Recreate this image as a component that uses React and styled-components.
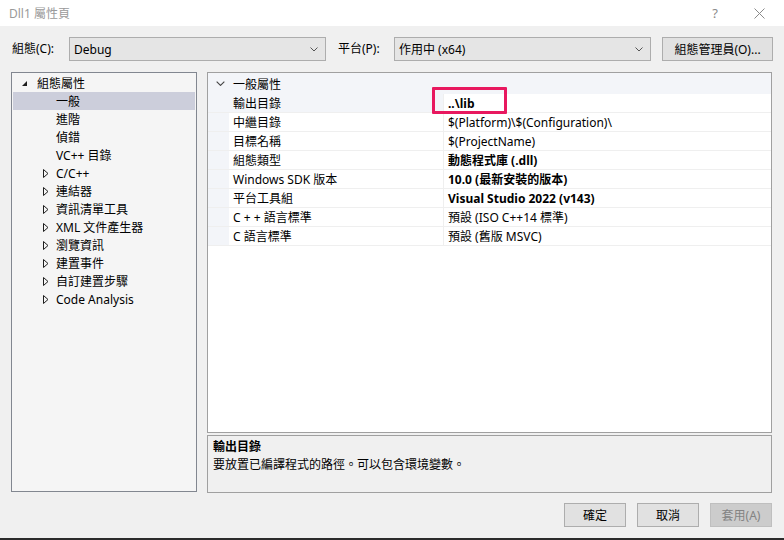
import React from 'react';
import styled, { createGlobalStyle } from 'styled-components';

const Global = createGlobalStyle`
  html, body { margin: 0; padding: 0; }
  body {
    width: 784px; height: 540px; overflow: hidden; background: #f0f0f0;
    font-family: "Noto Sans", "Noto Sans CJK TC", sans-serif;
    font-size: 12px; color: #000;
  }
  * { box-sizing: border-box; }
`;

const Window = styled.div`
  width: 784px; height: 540px; display: flex; flex-direction: column;
  background: #f0f0f0; border-bottom: 2px solid #2b2b2b;
`;

const TitleBar = styled.div`
  height: 26px; background: #fff; display: flex; align-items: center;
  padding-left: 9px; padding-right: 3px; color: #9a9a9a; font-size: 12px;
`;
const TitleText = styled.div` flex: 1; `;
const TitleBtn = styled.div`
  width: 44px; height: 26px; display: flex; align-items: center; justify-content: center;
  color: #8a8a8a; font-size: 13px;
`;

const Toolbar = styled.div`
  display: flex; align-items: center; height: 24px; margin-top: 11px; padding-left: 12px;
`;
const Label = styled.div`
  width: ${p => p.$w}px; line-height: 24px; white-space: nowrap;
`;
const Combo = styled.div`
  width: ${p => p.$w}px; height: 24px; background: #e5e5e5; border: 1px solid #adadad;
  display: flex; align-items: center; padding: 0 7px 0 4px; margin-right: ${p => p.$mr}px;
`;
const ComboText = styled.div` flex: 1; `;
const Button = styled.div`
  width: ${p => p.$w}px; height: 24px; border: 1px solid ${p => p.$disabled ? '#bfbfbf' : '#adadad'};
  background: ${p => p.$disabled ? '#cccccc' : '#e1e1e1'}; color: ${p => p.$disabled ? '#838383' : '#000'};
  display: flex; align-items: center; justify-content: center;
`;

const Main = styled.div`
  display: flex; align-items: flex-start; gap: 10px; margin-top: 11px; padding-left: 11px; height: 421px;
`;
const Tree = styled.div`
  width: 186px; height: 420px; background: #f5f5f5; border: 1px solid #828790; padding-top: 1px;
`;
const TreeRow = styled.div`
  height: 18px; display: flex; align-items: center; margin: 0 1px;
  background: ${p => p.$sel ? '#cccedb' : 'transparent'};
  padding-left: ${p => p.$level ? 30 : 8}px;
`;
const TreeIcon = styled.div`
  width: ${p => p.$level ? 13 : 16}px; display: flex; align-items: center;
`;
const TreeText = styled.div` white-space: nowrap; `;

const RightCol = styled.div`
  width: 565px; display: flex; flex-direction: column; gap: 2px;
`;
const Grid = styled.div`
  position: relative; height: 361px; background: #fff; border: 1px solid #a0a0a0;
`;
const HeaderRow = styled.div`
  height: 21px; background: #f3f5f9; display: flex; align-items: center;
`;
const HeaderIcon = styled.div`
  width: 25px; display: flex; justify-content: center;
`;
const PropRow = styled.div`
  height: 19px; display: flex; border-bottom: 1px solid #efefef;
`;
const Gutter = styled.div` width: 21px; background: #f3f5f9; `;
const NameCell = styled.div`
  width: 215px; padding-left: 4px; display: flex; align-items: center; white-space: nowrap;
  background: ${p => p.$sel ? '#f3f5f9' : '#fff'}; border-right: 1px solid #efefef;
`;
const ValueCell = styled.div`
  flex: 1; padding-left: 4px; display: flex; align-items: center; white-space: nowrap;
  font-weight: ${p => p.$bold ? 700 : 400};
`;
const Highlight = styled.div`
  position: absolute; left: 224px; top: 14px; width: 75px; height: 27px;
  border: 3px solid #e8185f; border-radius: 1px; pointer-events: none;
`;

const Desc = styled.div`
  height: 58px; border: 1px solid #a0a0a0; background: #f0f0f0; padding: 2px 5px;
`;
const DescTitle = styled.div` font-weight: 700; line-height: 18px; `;
const DescText = styled.div` line-height: 18px; `;

const Footer = styled.div`
  display: flex; justify-content: flex-end; gap: 11px; margin-top: 10px; padding-right: 12px;
`;

const Chevron = ({ size = 8, color = '#555' }) => (
  <svg width={size} height={size / 2 + 1} viewBox="0 0 8 5">
    <path d="M0.5 0.5 L4 4 L7.5 0.5" fill="none" stroke={color} strokeWidth="1" />
  </svg>
);
const Expanded = () => (
  <svg width="7" height="7" viewBox="0 0 7 7"><path d="M6 1 L6 6 L1 6 Z" fill="#1e1e1e" /></svg>
);
const Collapsed = () => (
  <svg width="6" height="9" viewBox="0 0 6 9"><path d="M0.5 0.5 L5 4.5 L0.5 8.5 Z" fill="none" stroke="#1e1e1e" strokeWidth="1" /></svg>
);
const CloseX = () => (
  <svg width="11" height="11" viewBox="0 0 11 11"><path d="M0.5 0.5 L10.5 10.5 M10.5 0.5 L0.5 10.5" stroke="#8a8a8a" strokeWidth="1" /></svg>
);

const treeItems = [
  { t: '組態屬性', level: 0, icon: 'exp' },
  { t: '一般', level: 1, sel: true },
  { t: '進階', level: 1 },
  { t: '偵錯', level: 1 },
  { t: 'VC++ 目錄', level: 1 },
  { t: 'C/C++', level: 1, icon: 'col' },
  { t: '連結器', level: 1, icon: 'col' },
  { t: '資訊清單工具', level: 1, icon: 'col' },
  { t: 'XML 文件產生器', level: 1, icon: 'col' },
  { t: '瀏覽資訊', level: 1, icon: 'col' },
  { t: '建置事件', level: 1, icon: 'col' },
  { t: '自訂建置步驟', level: 1, icon: 'col' },
  { t: 'Code Analysis', level: 1, icon: 'col' },
];

const props = [
  { n: '輸出目錄', v: '..\\lib', b: true, sel: true },
  { n: '中繼目錄', v: '$(Platform)\\$(Configuration)\\' },
  { n: '目標名稱', v: '$(ProjectName)' },
  { n: '組態類型', v: '動態程式庫 (.dll)', b: true },
  { n: 'Windows SDK 版本', v: '10.0 (最新安裝的版本)', b: true },
  { n: '平台工具組', v: 'Visual Studio 2022 (v143)', b: true },
  { n: 'C + + 語言標準', v: '預設 (ISO C++14 標準)' },
  { n: 'C 語言標準', v: '預設 (舊版 MSVC)' },
];

export default function App() {
  return (
    <Window>
      <Global />
      <TitleBar>
        <TitleText>Dll1 屬性頁</TitleText>
        <TitleBtn>?</TitleBtn>
        <TitleBtn><CloseX /></TitleBtn>
      </TitleBar>
      <Toolbar>
        <Label $w={57}>組態(C):</Label>
        <Combo $w={257} $mr={12}><ComboText>Debug</ComboText><Chevron /></Combo>
        <Label $w={56}>平台(P):</Label>
        <Combo $w={257} $mr={11}><ComboText>作用中 (x64)</ComboText><Chevron /></Combo>
        <Button $w={111}>組態管理員(O)...</Button>
      </Toolbar>
      <Main>
        <Tree>
          {treeItems.map((it, i) => (
            <TreeRow key={i} $level={it.level} $sel={it.sel}>
              <TreeIcon $level={it.level}>
                {it.icon === 'exp' && <Expanded />}
                {it.icon === 'col' && <Collapsed />}
              </TreeIcon>
              <TreeText>{it.t}</TreeText>
            </TreeRow>
          ))}
        </Tree>
        <RightCol>
          <Grid>
            <HeaderRow>
              <HeaderIcon><Chevron size={9} color="#444" /></HeaderIcon>
              <TreeText>一般屬性</TreeText>
            </HeaderRow>
            {props.map((p, i) => (
              <PropRow key={i}>
                <Gutter />
                <NameCell $sel={p.sel}>{p.n}</NameCell>
                <ValueCell $bold={p.b}>{p.v}</ValueCell>
              </PropRow>
            ))}
            <Highlight />
          </Grid>
          <Desc>
            <DescTitle>輸出目錄</DescTitle>
            <DescText>要放置已編譯程式的路徑。可以包含環境變數。</DescText>
          </Desc>
        </RightCol>
      </Main>
      <Footer>
        <Button $w={62}>確定</Button>
        <Button $w={62}>取消</Button>
        <Button $w={62} $disabled>套用(A)</Button>
      </Footer>
    </Window>
  );
}
